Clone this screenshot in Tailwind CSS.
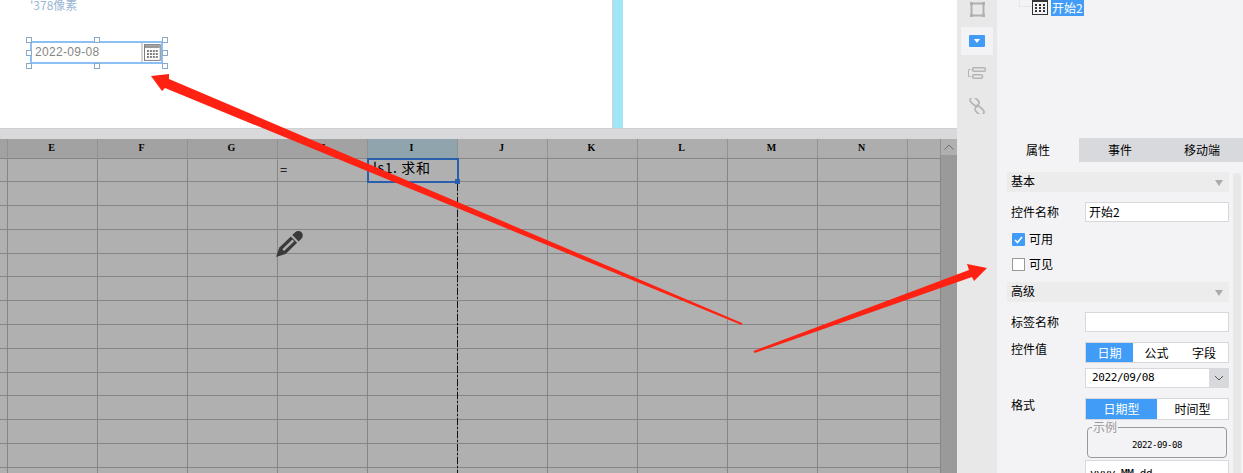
<!DOCTYPE html>
<html lang="en">
<head>
    <meta charset="UTF-8">
    <title>Date widget editor</title>
    <script src="https://cdn.jsdelivr.net/npm/@tailwindcss/browser@4"></script>
</head>
<body class="bg-white">
    <div class="relative flex w-[1243px] h-[473px] overflow-hidden text-[12px] text-black font-['Noto_Sans_CJK_SC','Liberation_Sans',sans-serif]">

        <!-- left: canvas + sheet -->
        <div class="flex flex-col w-[957px] shrink-0">
            <div class="relative h-[128px] bg-white shrink-0 overflow-hidden">
                <div class="absolute left-[30px] top-[-3px] text-[12px] leading-[16px] text-[#9ab6d4]">'378像素</div>
                <div class="absolute left-[612px] top-0 h-full w-[11px] border-l border-[#cfcfcf] bg-[#a0e6f6]"></div>

                <div class="absolute left-[30px] top-[41px] flex items-center w-[133px] h-[23px] border-2 border-[#8cc0f5] bg-white">
                    <span class="ml-[3px] w-[108px] -mt-[2px] text-[12px] tracking-[0.3px] text-[#858585] font-['Liberation_Sans',sans-serif]">2022-09-08</span>
                    <span class="w-[2px] h-[19px] bg-[#d4d4d4]"></span>
                    <svg class="ml-[1px]" width="17" height="17" viewBox="0 0 17 17" fill="none">
                        <rect x="0.5" y="0.5" width="16" height="16" fill="#fff" stroke="#7d7d7d"/>
                        <rect x="1" y="1" width="15" height="3" fill="#9a9a9a"/>
                        <path d="M3 7h2M6 7h2M9 7h2M12 7h2M3 10h2M6 10h2M9 10h2M12 10h2M3 13h2M6 13h2M9 13h2M12 13h2" stroke="#7d7d7d" stroke-width="2"/>
                    </svg>
                </div>
                <span class="absolute left-[26px] top-[37px] size-[6px] border border-[#8aa9c9] bg-white"></span>
                <span class="absolute left-[94px] top-[37px] size-[6px] border border-[#8aa9c9] bg-white"></span>
                <span class="absolute left-[162px] top-[37px] size-[6px] border border-[#8aa9c9] bg-white"></span>
                <span class="absolute left-[26px] top-[50px] size-[6px] border border-[#8aa9c9] bg-white"></span>
                <span class="absolute left-[162px] top-[50px] size-[6px] border border-[#8aa9c9] bg-white"></span>
                <span class="absolute left-[26px] top-[63px] size-[6px] border border-[#8aa9c9] bg-white"></span>
                <span class="absolute left-[94px] top-[63px] size-[6px] border border-[#8aa9c9] bg-white"></span>
                <span class="absolute left-[162px] top-[63px] size-[6px] border border-[#8aa9c9] bg-white"></span>
            </div>
            <div class="h-[11px] shrink-0 bg-[#d9d9db] border-t border-[#d0d0d0]"></div>

            <div class="flex flex-1 min-h-0">
                <div class="relative w-[941px] shrink-0 overflow-hidden bg-[#b0b0b0]" id="sheet"></div>
                <div class="flex flex-col w-[16px] bg-[#9a9a9a]">
                    <div class="flex items-center justify-center h-[16px] bg-[#b0b0b0]">
                        <svg width="10" height="6" viewBox="0 0 10 6" fill="none"><path d="M0.5 5.500L5 1l4.500 4.500" stroke="#6f6f6f"/></svg>
                    </div>
                </div>
            </div>
        </div>

        <!-- icon rail -->
        <div class="flex flex-col items-center w-[40px] shrink-0 bg-[#e8e8e8]">
            <svg class="mt-[2px]" width="15" height="15" viewBox="0 0 15 15" fill="none">
                <rect x="1.500" y="1.500" width="12" height="12" stroke="#b0b0b0" stroke-width="2"/>
                <path d="M0 0h3v3H0zM12 0h3v3h-3zM0 12h3v3H0zM12 12h3v3h-3z" fill="#b0b0b0"/>
            </svg>
            <div class="flex items-center justify-center w-[32px] h-[28px] mt-[10px] bg-[#f3f3f6]">
                <div class="flex items-center justify-center w-[16px] h-[12px] rounded-[1px] bg-[#409cf7]">
                    <svg width="6" height="4" viewBox="0 0 6 4"><path d="M0 0h6L3 4z" fill="#fff"/></svg>
                </div>
            </div>
            <svg class="mt-[12px]" width="18" height="12" viewBox="0 0 18 12" fill="none" stroke="#b5b5b5">
                <rect x="4.500" y="0.800" width="13" height="3.400" rx="1.700" stroke-width="1.600"/>
                <rect x="4.500" y="7.800" width="10" height="3.400" rx="1.700" stroke-width="1.600"/>
                <path d="M2.500 2.500H0.500v7h2"/>
            </svg>
            <svg class="mt-[19px]" width="16" height="16" viewBox="0 0 16 16" fill="none" stroke="#b5b5b5" stroke-width="1.700">
                <g transform="rotate(45 8 8)">
                    <rect x="-2" y="3.500" width="10" height="6" rx="3"/>
                    <rect x="8" y="6.500" width="10" height="6" rx="3"/>
                </g>
            </svg>
        </div>

        <!-- properties panel -->
        <div class="flex flex-col flex-1 min-w-0 bg-[#f3f3f6]">
            <div class="relative h-[138px] shrink-0">
                <div class="absolute left-[22px] top-0 w-[13px] h-[7px] border-b border-l border-[#e6e6e8]"></div>
                <div class="flex items-start pl-[35px]">
                    <svg width="16" height="15" viewBox="0 0 16 15" fill="none">
                        <rect x="0.500" y="-1" width="15" height="15.500" fill="#f3f3f6" stroke="#333"/>
                        <rect x="1" y="0" width="14" height="2" fill="#333"/>
                        <path d="M3 5h2M7 5h2M11 5h2M3 8h2M7 8h2M11 8h2M3 11h2M7 11h2M11 11h2" stroke="#333" stroke-width="2"/>
                    </svg>
                    <span class="ml-[3px] h-[16px] px-[1px] leading-[15px] text-white bg-[#409cf7]">开始2</span>
                </div>
            </div>

            <div class="flex h-[24px] shrink-0 leading-[24px] text-center">
                <div class="w-[82px] bg-[#f3f3f6]">属性</div>
                <div class="w-[82px] bg-[#d8d9dc]">事件</div>
                <div class="flex-1 bg-[#d8d9dc]">移动端</div>
            </div>

            <div class="relative flex-1 min-h-0 overflow-hidden pl-[10px] pt-[10px]">
                <div class="absolute left-[236px] top-[11px] bottom-0 w-[8px] rounded-t-[3px] bg-[#e8e8e8]"></div>

                <div class="flex items-center justify-between w-[222px] h-[20px] pl-[4px] pr-[5px] bg-[#ececec]">
                    <span class="-mt-[2px]">基本</span>
                    <svg class="mt-[1px]" width="10" height="6" viewBox="0 0 10 6"><path d="M1 0h8L5 6z" fill="#aaa"/></svg>
                </div>
                <div class="flex items-center w-[222px] mt-[10px] pl-[4px]">
                    <span class="w-[74px]">控件名称</span>
                    <div class="w-[144px] h-[20px] pl-[3px] leading-[18px] border border-[#d8d8dc] bg-white">开始2</div>
                </div>
                <label class="flex items-center mt-[11px] ml-[5px] h-[13px]">
                    <span class="flex items-center justify-center size-[13px] rounded-[1px] bg-[#409cf7]">
                        <svg width="9" height="8" viewBox="0 0 9 8" fill="none"><path d="M1 4l2.500 2.500L8 1" stroke="#fff" stroke-width="1.600"/></svg>
                    </span>
                    <span class="ml-[4px] -mt-[2px]">可用</span>
                </label>
                <label class="flex items-center mt-[12px] ml-[5px] h-[13px]">
                    <span class="size-[13px] border border-[#999] bg-white"></span>
                    <span class="ml-[4px] -mt-[2px]">可见</span>
                </label>

                <div class="flex items-center justify-between w-[222px] h-[20px] mt-[11px] pl-[4px] pr-[5px] bg-[#ececec]">
                    <span class="-mt-[2px]">高级</span>
                    <svg class="mt-[1px]" width="10" height="6" viewBox="0 0 10 6"><path d="M1 0h8L5 6z" fill="#aaa"/></svg>
                </div>
                <div class="flex items-center w-[222px] mt-[10px] pl-[4px]">
                    <span class="w-[74px]">标签名称</span>
                    <div class="w-[144px] h-[20px] border border-[#d8d8dc] bg-white"></div>
                </div>

                <div class="flex w-[222px] mt-[10px] pl-[4px]">
                    <span class="w-[74px] leading-[13px]">控件值</span>
                    <div class="w-[144px]">
                        <div class="flex h-[21px] leading-[19px] text-center border border-[#d8d8dc] bg-white">
                            <span class="w-[47px] text-white bg-[#409cf7]">日期</span>
                            <span class="w-[47px]">公式</span>
                            <span class="w-[48px]">字段</span>
                        </div>
                        <div class="flex h-[20px] mt-[5px] border border-[#d8d8dc] bg-white">
                            <span class="flex-1 pl-[6px] leading-[18px] text-[11px] font-['DejaVu_Sans_Mono',monospace] tracking-[-0.4px]">2022/09/08</span>
                            <span class="flex items-center justify-center w-[20px] -my-[1px] -mr-[1px] bg-[#d8d9dc]">
                                <svg width="10" height="6" viewBox="0 0 10 6" fill="none"><path d="M1 1l4 4 4-4" stroke="#555"/></svg>
                            </span>
                        </div>
                    </div>
                </div>

                <div class="flex w-[222px] mt-[10px] pl-[4px]">
                    <span class="w-[74px] leading-[14px]">格式</span>
                    <div class="w-[144px]">
                        <div class="flex h-[22px] leading-[20px] text-center border border-[#d8d8dc] bg-white">
                            <span class="w-[71px] text-white bg-[#409cf7]">日期型</span>
                            <span class="w-[71px]">时间型</span>
                        </div>
                        <div class="relative h-[31px] mt-[7px] mx-[2px] rounded-[4px] border border-[#999] text-center">
                            <span class="absolute left-[4px] -top-[8px] px-[1px] leading-[14px] text-[#999] bg-[#f3f3f6]">示例</span>
                            <span class="block mt-[11px] leading-[12px] text-[9px] tracking-[-0.4px] font-['DejaVu_Sans_Mono',monospace]">2022-09-08</span>
                        </div>
                        <div class="h-[20px] mt-[2px] pl-[4px] leading-[26px] text-[11px] border border-[#d8d8dc] bg-white font-['DejaVu_Sans_Mono',monospace] tracking-[-0.4px]">yyyy-MM-dd</div>
                    </div>
                </div>
            </div>
        </div>

        <!-- annotation arrows and sheet overlays -->
        <svg class="absolute left-0 top-0 pointer-events-none" width="1243" height="473" viewBox="0 0 1243 473">
            <path d="M457.500 184V473" stroke="#111" stroke-dasharray="7 2 2 2"/>
            <g transform="translate(276 257) rotate(-44)" fill="#3a3a3a">
                <path d="M0 0L9 -4.500H25V4.500H9Z"/>
                <rect x="10" y="-1.200" width="14" height="2.400" fill="#b0b0b0"/>
                <path d="M27 -4.500H31a4.500 4.500 0 0 1 0 9H27Z"/>
            </g>
            <path d="M151 76L169 74L169 79L742.500 323.300L741.500 325L165 88L162 91Z" fill="#ff2212"/>
            <path d="M753.500 351L969 270L967 264L987 268L974 281L972 277L754.500 353Z" fill="#ff2212"/>
        </svg>
    </div>

    <script>
        const sheet = document.getElementById("sheet");
        const columns = ["", "E", "F", "G", "H", "I", "J", "K", "L", "M", "N", ""];
        const widths = [8, 90, 90, 90, 90, 90, 90, 90, 90, 90, 90, 33];
        const rowHeights = [23, 24, 24, 24, 23, 24, 24, 24, 24, 23, 24, 24, 24, 24];

        function headerClass(i) {
            if (i < 5) return "bg-[#a2a2a2]";
            if (i === 5) return "bg-[#90a4ad]";
            return "bg-[#adadad]";
        }

        const header = document.createElement("div");
        header.className = "flex";
        columns.forEach((name, i) => {
            const cell = document.createElement("div");
            cell.className = "shrink-0 box-border border-r border-r-[#929292] border-b border-b-[#868686] pr-[2px] text-center leading-[18px] text-[10px] font-bold font-['Liberation_Serif',serif] " + headerClass(i);
            cell.style.width = widths[i] + "px";
            cell.style.height = "20px";
            cell.textContent = name;
            header.appendChild(cell);
        });
        sheet.appendChild(header);

        rowHeights.forEach((height, r) => {
            const row = document.createElement("div");
            row.className = "flex";
            widths.forEach((width, i) => {
                const cell = document.createElement("div");
                cell.className = "shrink-0 box-border border-r border-b border-[#868686] pl-[2px] text-[13px] leading-[22px]";
                cell.style.width = width + "px";
                cell.style.height = height + "px";
                if (r === 0 && i === 4) cell.textContent = "=";
                row.appendChild(cell);
            });
            sheet.appendChild(row);
        });

        // selected cell outline
        const picked = document.createElement("div");
        picked.className = "absolute left-[367px] top-[19px] w-[92px] h-[25px] border-2 border-[#2a5fae] pl-[4px] text-[14px] tracking-[0.6px] leading-[15px] font-['Noto_Sans_CJK_SC',sans-serif]";
        picked.innerHTML = 'ls1. 求和<span class="absolute right-[-3px] bottom-[-3px] size-[5px] bg-[#2a5fae]"></span>';
        sheet.appendChild(picked);
    </script>
</body>
</html>
